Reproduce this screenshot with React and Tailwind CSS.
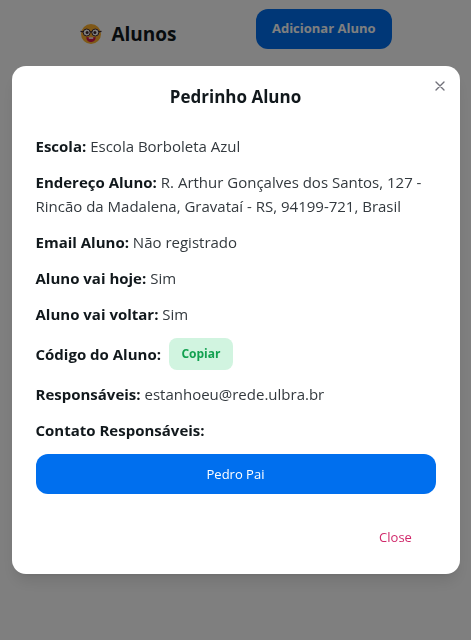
import { useState } from "react";

const student = {
  name: "Pedrinho Aluno",
  details: [
    { label: "Escola:", value: "Escola Borboleta Azul" },
    { label: "Endereço Aluno:", value: "R. Arthur Gonçalves dos Santos, 127 - Rincão da Madalena, Gravataí - RS, 94199-721, Brasil" },
    { label: "Email Aluno:", value: "Não registrado" },
    { label: "Aluno vai hoje:", value: "Sim" },
    { label: "Aluno vai voltar:", value: "Sim" },
  ],
  guardians: "estanhoeu@rede.ulbra.br",
  contacts: ["Pedro Pai"],
};

function NerdFace() {
  return (
    <svg className="size-6" viewBox="0 0 24 24" aria-hidden="true">
      <circle cx="12" cy="12" r="10" fill="#ffb02e" />
      <path d="M7.500 15c1.500.6 7.500.6 9 0 .5 2.800-1.500 5-4.500 5s-5-2.200-4.500-5z" fill="#d3154a" />
      <path d="M9.800 15.300h4.400v1.500H9.800z" fill="#fff" />
      <g fill="#fff" stroke="#402a32" strokeWidth="1">
        <circle cx="7.700" cy="10.500" r="3.500" />
        <circle cx="16.300" cy="10.500" r="3.500" />
      </g>
      <path d="M1.500 9.300l2.900.6M22.500 9.300l-2.900.6M11 10c.6-.5 1.400-.5 2 0" fill="none" stroke="#402a32" strokeWidth="1.200" />
      <circle cx="8.100" cy="10.500" r="1.500" fill="#402a32" />
      <circle cx="15.900" cy="10.500" r="1.500" fill="#402a32" />
    </svg>
  );
}

function Detail({ label, children }) {
  return (
    <p className="text-[#33393e]">
      <strong className="font-bold text-[#11181c]">{label}</strong> {children}
    </p>
  );
}

function StudentModal({ student, onClose }) {
  return (
    <div className="fixed inset-0 z-50 flex items-center justify-center bg-black/50">
      <section
        role="dialog"
        aria-modal="true"
        aria-labelledby="student-name"
        className="relative w-full max-w-md rounded-[14px] bg-white shadow-lg"
      >
        <button
          onClick={onClose}
          aria-label="Fechar"
          className="absolute top-1 right-1 rounded-full p-2 text-[#71717a] cursor-pointer"
        >
          <svg className="size-4" viewBox="0 0 24 24" fill="none" stroke="currentColor" strokeWidth="2" strokeLinecap="round">
            <path d="M18 6L6 18M6 6l12 12" />
          </svg>
        </button>

        <header className="px-6 pt-[17px] pb-[15px] text-center">
          <h2 id="student-name" className="text-[17px] leading-7 font-bold">{student.name}</h2>
        </header>

        <div className="flex flex-col gap-3 px-6 py-2 text-[15px] leading-6">
          {student.details.map((item) => (
            <Detail key={item.label} label={item.label}>{item.value}</Detail>
          ))}
          <div className="flex items-center gap-2">
            <strong className="font-bold">Código do Aluno:</strong>
            <button className="h-8 min-w-16 rounded-lg bg-[#d1f4e0] px-3 text-xs font-bold text-[#12a150] cursor-pointer">
              Copiar
            </button>
          </div>
          <Detail label="Responsáveis:">{student.guardians}</Detail>
          <Detail label="Contato Responsáveis:" />
          {student.contacts.map((name) => (
            <button key={name} className="h-10 w-full rounded-xl bg-[#006fee] px-4 text-[13px] font-medium text-white cursor-pointer">
              {name}
            </button>
          ))}
        </div>

        <footer className="flex justify-end px-6 py-4">
          <button onClick={onClose} className="h-10 min-w-20 rounded-xl px-4 text-[13px] text-[#d0286a] cursor-pointer">
            Close
          </button>
        </footer>
      </section>
    </div>
  );
}

export default function App() {
  const [open, setOpen] = useState(true);

  return (
    <main className="min-h-screen bg-white font-['Open_Sans',sans-serif] text-[#11181c]">
      <div className="flex items-start justify-evenly pt-[9px]">
        <h1 className="flex items-center gap-2 pt-[11px] text-[19px] leading-7 font-bold">
          <NerdFace />
          Alunos
        </h1>
        <button
          onClick={() => setOpen(true)}
          className="h-10 rounded-xl bg-[#006fee] px-4 text-[13px] font-bold text-white cursor-pointer"
        >
          Adicionar Aluno
        </button>
      </div>
      {open && <StudentModal student={student} onClose={() => setOpen(false)} />}
    </main>
  );
}
